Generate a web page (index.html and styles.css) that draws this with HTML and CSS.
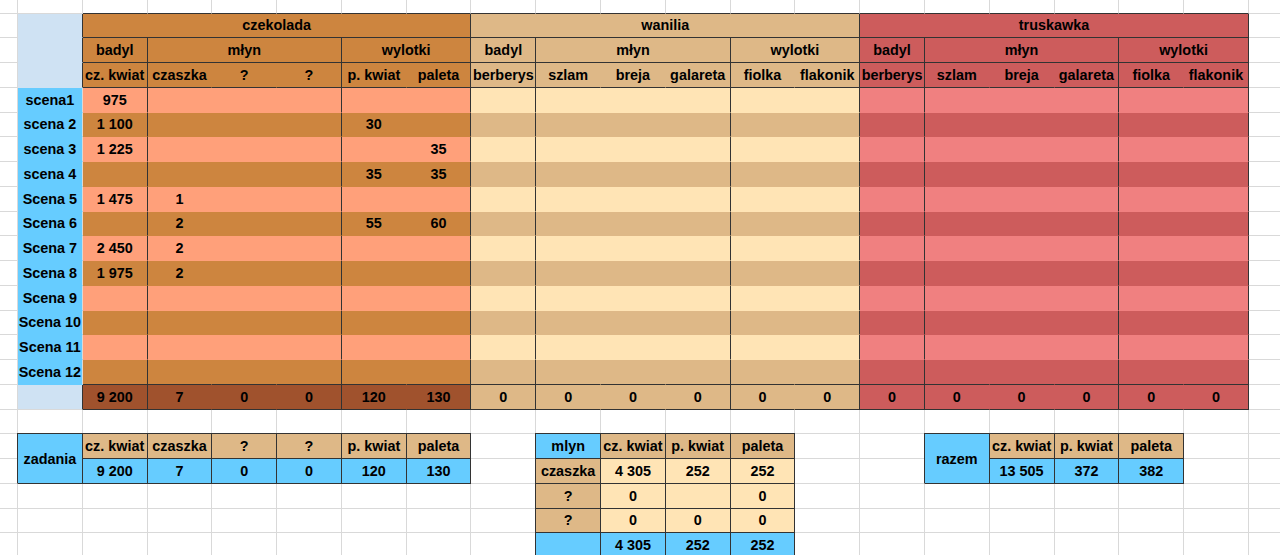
FILE: index.html
```html
<!DOCTYPE html>
<html lang="pl">
<head>
<meta charset="utf-8">
<title>Arkusz</title>
<link rel="stylesheet" href="styles.css">
</head>
<body>
<div class="sheet">
  <div class="row top"><div></div><div></div><div></div><div></div><div></div><div></div><div></div><div></div><div></div><div></div><div></div><div></div><div></div><div></div><div></div><div></div><div></div><div></div><div></div><div></div><div></div></div>

  <div class="row grp"><div></div><div class="ha"></div><div class="h hc g6">czekolada</div><div class="h hv g6">wanilia</div><div class="h hs g6">truskawka</div><div></div></div>

  <div class="row cat"><div></div><div class="ha"></div><div class="h hc">badyl</div><div class="h hc g3">młyn</div><div class="h hc g2">wylotki</div><div class="h hv">badyl</div><div class="h hv g3">młyn</div><div class="h hv g2">wylotki</div><div class="h hs">badyl</div><div class="h hs g3">młyn</div><div class="h hs g2">wylotki</div><div></div></div>

  <div class="row blk sub"><div></div><div class="ha"></div><div>cz. kwiat</div><div>czaszka</div><div>?</div><div>?</div><div>p. kwiat</div><div>paleta</div><div>berberys</div><div>szlam</div><div>breja</div><div>galareta</div><div>fiolka</div><div>flakonik</div><div>berberys</div><div>szlam</div><div>breja</div><div>galareta</div><div>fiolka</div><div>flakonik</div><div></div></div>

  <div class="row blk odd"><div></div><div class="la">scena1</div><div>975</div><div></div><div></div><div></div><div></div><div></div><div></div><div></div><div></div><div></div><div></div><div></div><div></div><div></div><div></div><div></div><div></div><div></div><div></div></div>
  <div class="row blk even"><div></div><div class="la">scena 2</div><div>1 100</div><div></div><div></div><div></div><div>30</div><div></div><div></div><div></div><div></div><div></div><div></div><div></div><div></div><div></div><div></div><div></div><div></div><div></div><div></div></div>
  <div class="row blk odd"><div></div><div class="la">scena 3</div><div>1 225</div><div></div><div></div><div></div><div></div><div>35</div><div></div><div></div><div></div><div></div><div></div><div></div><div></div><div></div><div></div><div></div><div></div><div></div><div></div></div>
  <div class="row blk even"><div></div><div class="la">scena 4</div><div></div><div></div><div></div><div></div><div>35</div><div>35</div><div></div><div></div><div></div><div></div><div></div><div></div><div></div><div></div><div></div><div></div><div></div><div></div><div></div></div>
  <div class="row blk odd"><div></div><div class="la">Scena 5</div><div>1 475</div><div>1</div><div></div><div></div><div></div><div></div><div></div><div></div><div></div><div></div><div></div><div></div><div></div><div></div><div></div><div></div><div></div><div></div><div></div></div>
  <div class="row blk even"><div></div><div class="la">Scena 6</div><div></div><div>2</div><div></div><div></div><div>55</div><div>60</div><div></div><div></div><div></div><div></div><div></div><div></div><div></div><div></div><div></div><div></div><div></div><div></div><div></div></div>
  <div class="row blk odd"><div></div><div class="la">Scena 7</div><div>2 450</div><div>2</div><div></div><div></div><div></div><div></div><div></div><div></div><div></div><div></div><div></div><div></div><div></div><div></div><div></div><div></div><div></div><div></div><div></div></div>
  <div class="row blk even"><div></div><div class="la">Scena 8</div><div>1 975</div><div>2</div><div></div><div></div><div></div><div></div><div></div><div></div><div></div><div></div><div></div><div></div><div></div><div></div><div></div><div></div><div></div><div></div><div></div></div>
  <div class="row blk odd"><div></div><div class="la">Scena 9</div><div></div><div></div><div></div><div></div><div></div><div></div><div></div><div></div><div></div><div></div><div></div><div></div><div></div><div></div><div></div><div></div><div></div><div></div><div></div></div>
  <div class="row blk even"><div></div><div class="la">Scena 10</div><div></div><div></div><div></div><div></div><div></div><div></div><div></div><div></div><div></div><div></div><div></div><div></div><div></div><div></div><div></div><div></div><div></div><div></div><div></div></div>
  <div class="row blk odd"><div></div><div class="la">Scena 11</div><div></div><div></div><div></div><div></div><div></div><div></div><div></div><div></div><div></div><div></div><div></div><div></div><div></div><div></div><div></div><div></div><div></div><div></div><div></div></div>
  <div class="row blk even last"><div></div><div class="la">Scena 12</div><div></div><div></div><div></div><div></div><div></div><div></div><div></div><div></div><div></div><div></div><div></div><div></div><div></div><div></div><div></div><div></div><div></div><div></div><div></div></div>

  <div class="row blk tot"><div></div><div class="ta"></div><div>9 200</div><div>7</div><div>0</div><div>0</div><div>120</div><div>130</div><div>0</div><div>0</div><div>0</div><div>0</div><div>0</div><div>0</div><div>0</div><div>0</div><div>0</div><div>0</div><div>0</div><div>0</div><div></div></div>

  <div class="row"><div></div><div></div><div></div><div></div><div></div><div></div><div></div><div></div><div></div><div></div><div></div><div></div><div></div><div></div><div></div><div></div><div></div><div></div><div></div><div></div><div></div></div>

  <div class="row"><div></div><div class="bx bl r2">zadania</div><div class="bx bw">cz. kwiat</div><div class="bx bw">czaszka</div><div class="bx bw">?</div><div class="bx bw">?</div><div class="bx bw">p. kwiat</div><div class="bx bw">paleta</div><div></div><div class="bx bl">mlyn</div><div class="bx bw">cz. kwiat</div><div class="bx bw">p. kwiat</div><div class="bx bw">paleta</div><div></div><div></div><div class="bx bl r2">razem</div><div class="bx bw">cz. kwiat</div><div class="bx bw">p. kwiat</div><div class="bx bw">paleta</div><div></div><div></div></div>

  <div class="row"><div class="rd"></div><div class="bx bl">9 200</div><div class="bx bl">7</div><div class="bx bl">0</div><div class="bx bl">0</div><div class="bx bl">120</div><div class="bx bl">130</div><div></div><div class="bx bw">czaszka</div><div class="bx mo">4 305</div><div class="bx mo">252</div><div class="bx mo">252</div><div></div><div class="rd"></div><div class="bx bl">13 505</div><div class="bx bl">372</div><div class="bx bl">382</div><div></div><div></div></div>

  <div class="row"><div></div><div></div><div></div><div></div><div></div><div></div><div></div><div></div><div></div><div class="bx bw">?</div><div class="bx mo">0</div><div class="bx mo"></div><div class="bx mo">0</div><div></div><div></div><div></div><div></div><div></div><div></div><div></div><div></div></div>

  <div class="row"><div></div><div></div><div></div><div></div><div></div><div></div><div></div><div></div><div></div><div class="bx bw">?</div><div class="bx mo">0</div><div class="bx mo">0</div><div class="bx mo">0</div><div></div><div></div><div></div><div></div><div></div><div></div><div></div><div></div></div>

  <div class="row"><div></div><div></div><div></div><div></div><div></div><div></div><div></div><div></div><div></div><div class="bx bl"></div><div class="bx bl">4 305</div><div class="bx bl">252</div><div class="bx bl">252</div><div></div><div></div><div></div><div></div><div></div><div></div><div></div><div></div></div>
</div>
</body>
</html>
```

FILE: styles.css
```css
:root {
  --grid: #d9d9d9;
  --dk: #333333;
  --choc: #cd853f;
  --chocL: #ffa07a;
  --chocT: #a0522d;
  --van: #deb887;
  --vanL: #ffe4b5;
  --str: #cd5c5c;
  --strL: #f08080;
  --blue: #66ccff;
  --lblue: #cfe2f3;
}

html, body {
  margin: 0;
  padding: 0;
  background: #fff;
}

body {
  width: 1280px;
  height: 555px;
  overflow: hidden;
  font: bold 14.4px "Liberation Sans", Arial, sans-serif;
  color: #000;
}

.sheet {
  display: grid;
  grid-template-columns: 18px repeat(20, 64.79px);
  grid-template-rows: 13.5px repeat(22, 24.76px);
  width: max-content;
}

.row { display: contents; }

.row > * {
  border-right: 1px solid var(--grid);
  border-bottom: 1px solid var(--grid);
  display: flex;
  align-items: center;
  justify-content: center;
  white-space: nowrap;
  min-width: 0;
}

.g6 { grid-column: span 6; }
.g3 { grid-column: span 3; }
.g2 { grid-column: span 2; }
.r2 { grid-row: span 2; }

/* top edge of the big block */
.top > :nth-child(n+3):nth-child(-n+20) { border-bottom-color: var(--dk); }

/* header cells */
.row > .h { border-color: var(--dk); }
.hc { background: var(--choc); }
.hv { background: var(--van); }
.hs { background: var(--str); }

/* column A */
.row > .ha { background: var(--lblue); border-bottom-color: transparent; border-right-color: var(--dk); }
.row > .la { background: var(--blue); border-bottom-color: transparent; }
.row > .ta { background: var(--lblue); border-right-color: var(--dk); }

/* block rows */
.blk > :nth-child(n+3):nth-child(-n+20) { border-color: transparent; }

.row.blk > :nth-child(3),
.row.blk > :nth-child(6),
.row.blk > :nth-child(8),
.row.blk > :nth-child(9),
.row.blk > :nth-child(12),
.row.blk > :nth-child(14),
.row.blk > :nth-child(15),
.row.blk > :nth-child(18),
.row.blk > :nth-child(20) { border-right-color: var(--dk); }

.row.sub > :nth-child(n+3):nth-child(-n+20),
.row.last > :nth-child(n+3):nth-child(-n+20),
.row.tot > :nth-child(n+3):nth-child(-n+20) { border-bottom-color: var(--dk); }

.sub > :nth-child(n+3):nth-child(-n+8),
.even > :nth-child(n+3):nth-child(-n+8) { background: var(--choc); }
.sub > :nth-child(n+9):nth-child(-n+14),
.even > :nth-child(n+9):nth-child(-n+14),
.tot > :nth-child(n+9):nth-child(-n+14) { background: var(--van); }
.sub > :nth-child(n+15):nth-child(-n+20),
.even > :nth-child(n+15):nth-child(-n+20),
.tot > :nth-child(n+15):nth-child(-n+20) { background: var(--str); }

.odd > :nth-child(n+3):nth-child(-n+8) { background: var(--chocL); }
.odd > :nth-child(n+9):nth-child(-n+14) { background: var(--vanL); }
.odd > :nth-child(n+15):nth-child(-n+20) { background: var(--strL); }

.tot > :nth-child(n+3):nth-child(-n+8) { background: var(--chocT); }

/* summary tables */
.row > .bx {
  border-color: var(--dk);
  box-shadow: -1px 0 0 var(--dk), 0 -1px 0 var(--dk), -1px -1px 0 var(--dk);
}
.row > .rd { border-right-color: var(--dk); }
.bl { background: var(--blue); }
.bw { background: var(--van); }
.mo { background: var(--vanL); }
```
